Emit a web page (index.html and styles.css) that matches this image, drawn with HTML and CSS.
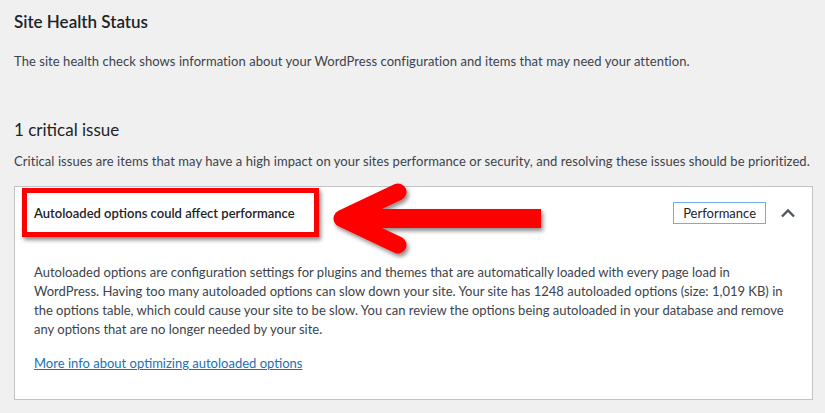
FILE: index.html
```html
<!DOCTYPE html>
<html lang="en">
<head>
  <meta charset="UTF-8">
  <meta name="viewport" content="width=device-width, initial-scale=1.0">
  <title>Site Health Status</title>
  <link rel="stylesheet" href="styles.css">
</head>
<body>

<div class="wrap">
  <h2 class="title">Site Health Status</h2>
  <p class="intro">The site health check shows information about your WordPress configuration and items that may need your attention.</p>

  <h3 class="issues-count">1 critical issue</h3>
  <p class="issues-desc">Critical issues are items that may have a high impact on your sites performance or security, and resolving these issues should be prioritized.</p>

  <div class="issue">
    <div class="issue-head">
      <span class="issue-title">Autoloaded options could affect performance</span>
      <span class="badge">Performance</span>
      <svg class="chevron" width="16" height="10" viewBox="0 0 16 10">
        <polyline points="2,8.5 8,2.5 14,8.5" fill="none" stroke="#50575e" stroke-width="2.4"/>
      </svg>
      <div class="highlight"></div>
    </div>
    <div class="issue-body">
      <p>Autoloaded options are configuration settings for plugins and themes that are automatically loaded with every page load in WordPress. Having too many autoloaded options can slow down your site. Your site has 1248 autoloaded options (size: 1,019 KB) in the options table, which could cause your site to be slow. You can review the options being autoloaded in your database and remove any options that are no longer needed by your site.</p>
      <p><a href="#">More info about optimizing autoloaded options</a></p>
    </div>
  </div>
</div>

<svg class="arrow" width="240" height="90" viewBox="320 178 240 90">
  <defs>
    <filter id="shadow" x="-10%" y="-20%" width="130%" height="150%">
      <feDropShadow dx="2" dy="3" stdDeviation="2" flood-color="#000" flood-opacity="0.45"/>
    </filter>
  </defs>
  <g filter="url(#shadow)" fill="#ff0000">
    <polyline points="398,192 342,218.5 398,245" fill="none" stroke="#ff0000" stroke-width="17" stroke-linecap="round" stroke-linejoin="round"/>
    <rect x="350" y="209" width="191" height="19"/>
  </g>
</svg>

</body>
</html>
```

FILE: styles.css
```css
body {
  margin: 0;
  background-color: #f0f0f1;
  color: #3c434a;
  font-family: Lato, sans-serif;
  font-size: 13px;
}
.wrap {
  padding: 0 12px 0 14px;
}
.title {
  margin: 0;
  padding-top: 10px;
  font-size: 17px;
  font-weight: 600;
  color: #1d2327;
  line-height: 24px;
}
.intro,
.issues-desc {
  letter-spacing: 0.06px;
}
.intro {
  margin: 17px 0 0;
  line-height: 20px;
}
.issues-count {
  margin: 47px 0 0;
  font-size: 17px;
  font-weight: 400;
  color: #1d2327;
  line-height: 24px;
}
.issues-desc {
  margin: 9px 0 0;
  line-height: 20px;
}
.issue {
  margin-top: 15px;
  background-color: #fff;
  border: 1px solid #c3c4c7;
  width: 797px;
}
.issue-head {
  position: relative;
  display: flex;
  align-items: center;
  height: 52px;
  padding: 0 16px 0 19px;
}
.issue-title {
  flex: 1;
  font-weight: 600;
  color: #1d2327;
}
.badge {
  border: 1px solid #72aee6;
  padding: 0 9px;
  line-height: 20px;
  color: #1d2327;
  margin-right: 14px;
}
.chevron {
  display: block;
}
.highlight {
  position: absolute;
  left: 7px;
  top: 1px;
  width: 287px;
  height: 39px;
  border: 5px solid #ff0000;
  box-shadow: 2px 3px 4px rgba(0, 0, 0, 0.45);
}
.issue-body {
  padding: 24px 28px 11px 19px;
}
.issue-body p {
  margin: 0 0 15px;
  line-height: 19px;
}
.issue-body a {
  color: #2271b1;
}
.arrow {
  position: absolute;
  left: 320px;
  top: 178px;
}
```
